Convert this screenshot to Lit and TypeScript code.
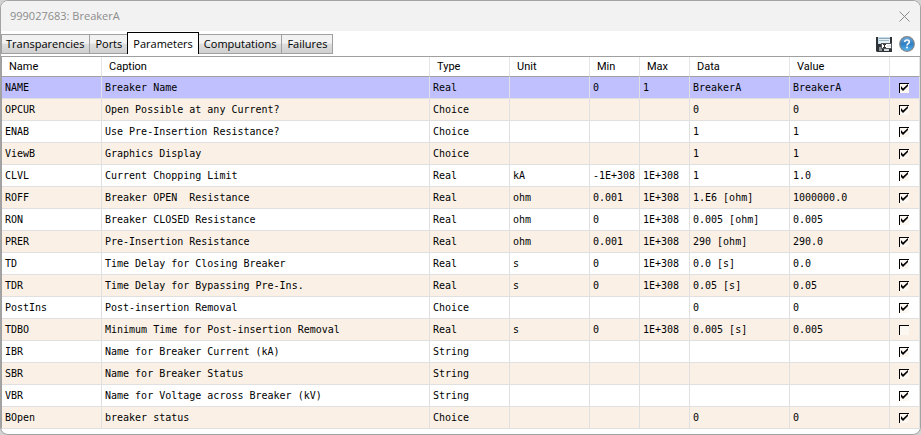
import { LitElement, html, css, svg } from "lit";
import { customElement, state } from "lit/decorators.js";

interface Param {
  name: string;
  caption: string;
  type: string;
  unit: string;
  min: string;
  max: string;
  data: string;
  value: string;
  shown: boolean;
}

const param = (
  name: string, caption: string, type: string, unit = "", min = "", max = "",
  data = "", value = "", shown = true,
): Param => ({ name, caption, type, unit, min, max, data, value, shown });

const PARAMS: Param[] = [
  param("NAME", "Breaker Name", "Real", "", "0", "1", "BreakerA", "BreakerA"),
  param("OPCUR", "Open Possible at any Current?", "Choice", "", "", "", "0", "0"),
  param("ENAB", "Use Pre-Insertion Resistance?", "Choice", "", "", "", "1", "1"),
  param("ViewB", "Graphics Display", "Choice", "", "", "", "1", "1"),
  param("CLVL", "Current Chopping Limit", "Real", "kA", "-1E+308", "1E+308", "1", "1.0"),
  param("ROFF", "Breaker OPEN  Resistance", "Real", "ohm", "0.001", "1E+308", "1.E6 [ohm]", "1000000.0"),
  param("RON", "Breaker CLOSED Resistance", "Real", "ohm", "0", "1E+308", "0.005 [ohm]", "0.005"),
  param("PRER", "Pre-Insertion Resistance", "Real", "ohm", "0.001", "1E+308", "290 [ohm]", "290.0"),
  param("TD", "Time Delay for Closing Breaker", "Real", "s", "0", "1E+308", "0.0 [s]", "0.0"),
  param("TDR", "Time Delay for Bypassing Pre-Ins.", "Real", "s", "0", "1E+308", "0.05 [s]", "0.05"),
  param("PostIns", "Post-insertion Removal", "Choice", "", "", "", "0", "0"),
  param("TDBO", "Minimum Time for Post-insertion Removal", "Real", "s", "0", "1E+308", "0.005 [s]", "0.005", false),
  param("IBR", "Name for Breaker Current (kA)", "String"),
  param("SBR", "Name for Breaker Status", "String"),
  param("VBR", "Name for Voltage across Breaker (kV)", "String"),
  param("BOpen", "breaker status", "Choice", "", "", "", "0", "0"),
];

const TABS = ["Transparencies", "Ports", "Parameters", "Computations", "Failures"];

const closeIcon = svg`<svg width="11" height="11" viewBox="0 0 11 11" aria-hidden="true">
  <path d="M0.5 0.5 10.5 10.5M10.5 0.5 0.5 10.5" fill="none" stroke="#8c8c8c" stroke-width="1"/>
</svg>`;

const saveIcon = svg`<svg width="16" height="16" viewBox="0 0 16 16" aria-hidden="true">
  <path d="M0 1h16v15H1l-1-1z" fill="#2e3338"/>
  <path d="M2 1h12v7H2z" fill="#c3dbe8"/>
  <path d="M3 2h11v1H3z" fill="#8fa9b8"/>
  <path d="M3 3h11v4H3z" fill="#e6f1f6"/>
  <path d="M3 4h10v1H3z" fill="#9fb6c3"/>
  <path d="M3 11h3v4H3z" fill="#8f969b"/>
  <path d="M5 7h11v6H5z" fill="#55595d"/>
  <path d="M6 8h9v4H6z" fill="#fff"/>
  <path d="M7 8h3v1H9v2h1v1H7v-1h1V9H7z" fill="#333"/>
  <path d="M11 9h4v2h-4z" fill="#e4e6e8"/>
  <path d="M8 13h5v2H8z" fill="#d5d8da"/>
</svg>`;

const helpIcon = svg`<svg width="16" height="16" viewBox="0 0 16 16" aria-hidden="true">
  <defs><linearGradient id="ball" x1="0" y1="0" x2="0" y2="1">
    <stop offset="0" stop-color="#6aa9dc"/><stop offset=".5" stop-color="#2f7fc4"/><stop offset="1" stop-color="#55b4ee"/>
  </linearGradient></defs>
  <circle cx="8" cy="8" r="7.9" fill="#7d858c"/>
  <circle cx="8" cy="8" r="6.7" fill="url(#ball)"/>
  <path d="M5.8 6C5.8 3.4 10.3 3.4 10.3 6c0 1.7-2.3 1.7-2.3 3.4" fill="none" stroke="#fff" stroke-width="1.6"/>
  <circle cx="8" cy="11.6" r="1" fill="#fff"/>
</svg>`;

const tickIcon = svg`<svg class="tick" width="10" height="10" viewBox="0 0 10 10" aria-hidden="true">
  <path d="M2 3v3l2 2 5-5V1L4 5.5z" fill="#000"/>
</svg>`;

@customElement("app-root")
export class AppRoot extends LitElement {
  @state() private tab = "Parameters";
  @state() private selected = 0;

  static styles = css`
    :host {
      display: block;
      min-height: 100vh;
      box-sizing: border-box;
      background: #d2d2d2;
      color: #000;
    }
    * { box-sizing: border-box; }
    button {
      margin: 0;
      padding: 0;
      border: 0;
      background: none;
      font: inherit;
      color: inherit;
    }
    svg { display: block; }
    .window {
      min-height: 100vh;
      border: 1px solid #a3a3a3;
      border-radius: 8px;
      background: #fff;
      overflow: hidden;
      padding-bottom: 4px;
    }
    .titlebar {
      display: flex;
      align-items: center;
      justify-content: space-between;
      height: 30px;
      padding: 0 10px 0 9px;
      background: #f2f2f2;
      color: #8c8c8c;
      font: 11px/16px "Open Sans", "Noto Sans", sans-serif;
    }
    .title { margin: 0; font: inherit; }
    .toolbar {
      display: flex;
      align-items: flex-end;
      justify-content: space-between;
      height: 23px;
      padding-right: 5px;
    }
    .tabs { display: flex; align-items: flex-end; }
    .tab {
      height: 20px;
      padding: 0 5px;
      border: 1px solid #a0a0a0;
      border-left-width: 0;
      background: linear-gradient(#f2f2f2 0 45%, #dedede 50%, #d0d0d0);
      font: 11px/16px "Open Sans", "Noto Sans", sans-serif;
    }
    .tab:first-child { border-left-width: 1px; padding-left: 4px; }
    .tab.active {
      height: 22px;
      margin-left: -1px;
      border: 1px solid #000;
      border-bottom: 0;
      background: #fff;
    }
    .tools { display: flex; gap: 7px; padding-bottom: 2px; }
    .grid {
      width: 100%;
      margin-top: 2px;
      border-collapse: separate;
      border-spacing: 0;
      table-layout: fixed;
      border-top: 1px solid #a0a0a0;
      border-left: 1px solid #a0a0a0;
    }
    .code, .data, .value { width: 100px; }
    .type, .unit { width: 80px; }
    .limit { width: 50px; }
    .pick { width: 30px; }
    th {
      height: 20px;
      padding: 0 0 0 7px;
      border-right: 1px solid #e5e5e5;
      border-bottom: 1px solid #a0a0a0;
      text-align: left;
      font: 11px/16px Roboto, "Noto Sans", sans-serif;
    }
    td {
      height: 22px;
      padding: 0 0 0 3px;
      border-right: 1px solid #e0e0e0;
      border-bottom: 1px solid #e0e0e0;
      font: 10px/12px "DejaVu Sans Mono", monospace;
      white-space: pre;
    }
    tr:nth-child(even) td { background: #faf0e6; }
    tr.selected td { background: #c0c0ff; }
    .check {
      display: grid;
      width: 10px;
      margin-left: 6px;
    }
    .check > * { grid-area: 1 / 1; }
    .box {
      appearance: none;
      width: 10px;
      height: 10px;
      margin: 0;
      border: 0 solid #000;
      border-width: 1px 0 0 1px;
      background: #fdf7f2;
    }
    .tick { visibility: hidden; pointer-events: none; }
    .box:checked + .tick { visibility: visible; }
  `;

  render() {
    return html`
      <main class="window">
        <header class="titlebar">
          <h1 class="title">999027683: BreakerA</h1>
          <button aria-label="Close">${closeIcon}</button>
        </header>
        <div class="toolbar">
          <div class="tabs" role="tablist">
            ${TABS.map((t) => html`<button
              class="tab ${t === this.tab ? "active" : ""}"
              role="tab"
              aria-selected=${t === this.tab}
              @click=${() => (this.tab = t)}>${t}</button>`)}
          </div>
          <div class="tools">
            <button aria-label="Save">${saveIcon}</button>
            <button aria-label="Help">${helpIcon}</button>
          </div>
        </div>
        <table class="grid">
          <thead>
            <tr>
              <th class="code">Name</th>
              <th>Caption</th>
              <th class="type">Type</th>
              <th class="unit">Unit</th>
              <th class="limit">Min</th>
              <th class="limit">Max</th>
              <th class="data">Data</th>
              <th class="value">Value</th>
              <th class="pick"></th>
            </tr>
          </thead>
          <tbody>
            ${PARAMS.map((p, i) => html`<tr
              class=${i === this.selected ? "selected" : ""}
              @click=${() => (this.selected = i)}>
              <td>${p.name}</td><td>${p.caption}</td><td>${p.type}</td><td>${p.unit}</td>
              <td>${p.min}</td><td>${p.max}</td><td>${p.data}</td><td>${p.value}</td>
              <td><label class="check"><input class="box" type="checkbox" aria-label=${"Show " + p.name} .checked=${p.shown}>${tickIcon}</label></td>
            </tr>`)}
          </tbody>
        </table>
      </main>
    `;
  }
}
